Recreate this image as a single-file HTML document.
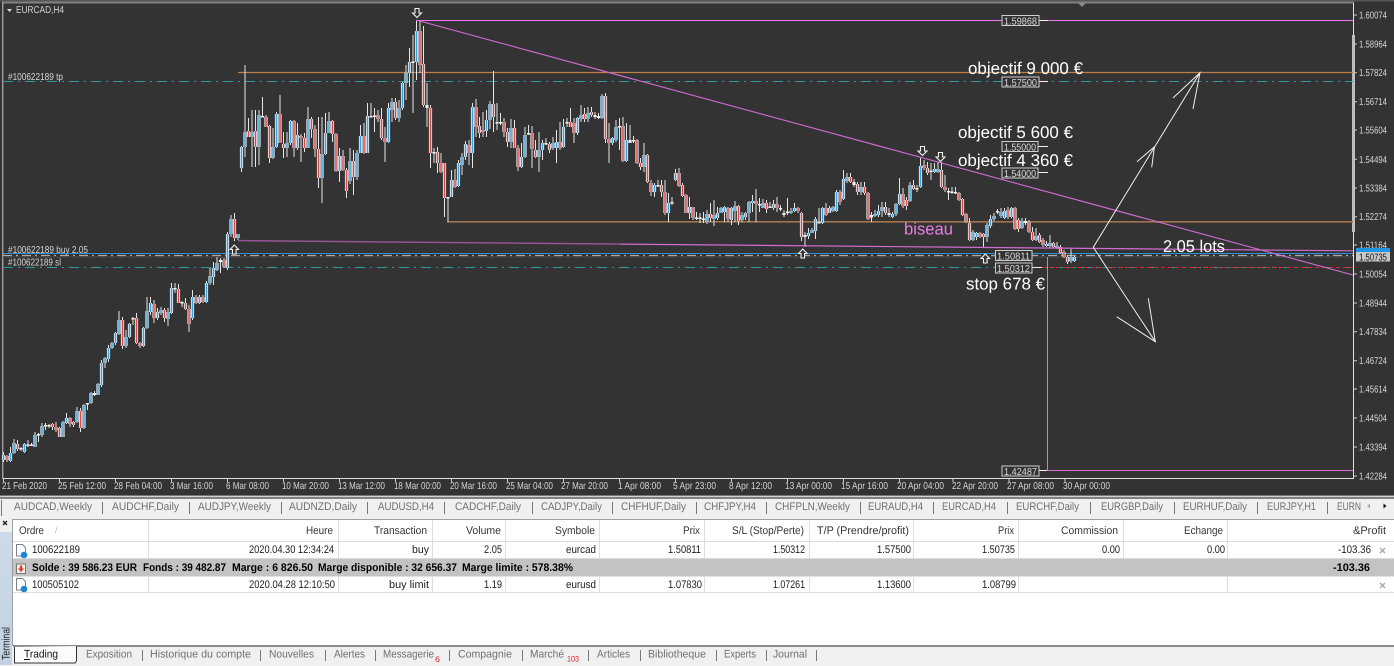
<!DOCTYPE html>
<html lang="fr"><head><meta charset="utf-8"><title>EURCAD,H4</title>
<style>
html,body{margin:0;padding:0;background:#f0f0f0;width:1394px;height:666px;overflow:hidden}
svg{display:block;font-family:"Liberation Sans",sans-serif}
.c{font-size:10px;fill:#d4d4d4}
.b{font-size:10px;fill:#d8d8d8}
.l{font-size:17px;fill:#fff}
.tb{font-size:11px;fill:#707070}
.h{font-size:11px;fill:#333}
.r{font-size:11px;fill:#222}
.s{font-size:11px;fill:#000;font-weight:bold}
</style></head><body>
<svg width="1394" height="666" viewBox="0 0 1394 666" xmlns="http://www.w3.org/2000/svg" text-rendering="geometricPrecision">
<defs>
<path id="pB" d="M3.5 455V460M10.5 453V461M14 443V453M24.5 444V452M35 435V447M42 426V435M63 422V437M66.5 418V423M77 411V422M84 405V428M91 393V403M98 384V395M101.5 363V385M105 358V363M108.5 348V359M112 343V348M115.5 333V343M119 320V334M126 337V346M129.5 324V337M143.5 328V346M147 311V328M150.5 303V312M157.5 312V318M161 310V313M168 312V319M171.5 288V313M192.5 297V318M199.5 297V303M206.5 283V302M210 276V283M213.5 268V277M217 263V270M227.5 234V268M231 219V234M238 234V238M241.5 147V168M245 132V147M252 132V137M259 115V147M273 147V158M276.5 114V147M287 143V148M290.5 121V143M297.5 135V148M308 119V148M322 154V178M325.5 133V154M329 121V133M339.5 156V171M350 161V181M357 153V177M360.5 136V153M367.5 116V153M388.5 108V142M392 102V110M399 108V118M402.5 83V108M406 73V83M409.5 62V73M416.5 31V62M451.5 180V197M458.5 163V186M462 157V165M465.5 144V157M472.5 107V153M486.5 120V131M490 104V120M511 128V142M521.5 157V167M525 135V157M539 150V157M542.5 143V150M553 143V148M556.5 142V148M563.5 127V147M577.5 118V133M581 115V119M588 113V119M602 96V118M612.5 138V143M616 127V140M626.5 140V161M644 155V167M654.5 185V192M668.5 203V213M675.5 173V180M689.5 207V213M707 214V222M714 215V219M717.5 213V218M721 208V213M724.5 207V212M731.5 208V220M735 206V211M742 215V220M745.5 213V217M749 202V213M752.5 201V203M763 203V208M773.5 204V208M791 211V213M794.5 208V211M808.5 233V236M812 230V233M815.5 219V231M822.5 208V223M829.5 208V213M833 207V211M836.5 192V211M843.5 179V199M847 177V181M861 187V192M875 214V216M878.5 211V215M882 207V211M892.5 214V217M896 204V214M899.5 194V204M910 185V201M920.5 166V187M934.5 169V172M938 169V172M973 232V240M976.5 233V237M987 225V237M990.5 219V226M994 216V219M1001 212V216M1004.5 211V218M1011.5 208V217M1022 221V228M1036 236V240M1046.5 244V246M1050 243V246M1057 246V248M1071 257V261M1074.5 257V261"/>
<path id="pR" d="M7 456V460M17.5 444V449M52.5 424V427M56 427V430M59.5 428V437M70 418V424M73.5 422V425M80.5 411V428M122.5 320V346M136.5 318V343M140 343V346M154 304V318M164.5 310V318M178.5 289V303M185.5 303V309M189 309V324M196 297V303M203 297V302M224 260V267M234.5 219V238M248.5 131V137M255.5 131V147M266 117V127M269.5 126V158M280 114V143M283.5 144V148M294 121V148M301 136V138M304.5 138V148M311.5 119V129M315 129V149M318.5 149V178M332.5 121V134M336 134V171M343 156V170M346.5 170V191M353.5 161V177M364 136V153M378 115V119M381.5 119V138M385 138V142M395.5 102V118M420 31V65M423.5 64V105M430.5 108V153M437.5 152V163M441 163V172M444.5 163V198M455 180V187M469 145V153M476 107V127M479.5 126V133M483 130V132M493.5 104V117M504 122V132M507.5 132V142M514.5 128V148M518 148V167M532 133V149M535.5 150V157M549.5 144V150M560 142V148M570.5 122V127M574 123V133M584.5 114V119M591.5 112V115M605.5 96V139M609 139V143M623 126V161M637 140V163M640.5 163V167M647.5 155V182M651 183V192M661.5 185V192M665 192V213M679 173V186M682.5 185V196M686 195V213M693 207V218M710.5 214V218M728 208V219M738.5 206V221M756 201V204M766.5 203V209M777 204V208M798 208V211M801.5 213V237M826 208V215M840 192V202M850.5 177V182M857.5 184V192M864.5 187V193M868 193V219M885.5 207V213M903 194V206M906.5 200V206M913.5 185V189M924 165V168M927.5 168V173M941.5 170V187M945 187V190M959 193V200M962.5 199V215M966 214V222M969.5 223V240M980 233V237M983.5 234V237M1008 210V217M1015 208V229M1018.5 220V229M1029 222V232M1032.5 232V240M1039.5 235V242M1043 240V245M1053.5 243V247M1060.5 247V253M1064 252V257M1067.5 257V262"/>
</defs>
<!-- chart background -->
<rect x="0" y="0" width="1394" height="497" fill="#333"/>
<rect x="0" y="0" width="1394" height="1.5" fill="#555"/>
<rect x="2" y="1.5" width="1352" height="2" fill="#808080"/>
<rect x="2" y="2" width="1.4" height="477" fill="#a0a0a0"/>
<path d="M3 478.5H1353.5V3" fill="none" stroke="#e0e0e0" stroke-width="1"/>
<rect x="1352" y="35" width="3" height="197" fill="#bdbdbd"/>
<path d="M1078 3h8l-4 4z" fill="#888"/>
<path d="M7 9h5l-2.5 3z" fill="#ddd"/>
<text class="c" x="16" y="13" textLength="48" lengthAdjust="spacingAndGlyphs">EURCAD,H4</text>
<text class="c" x="8" y="80" textLength="55" lengthAdjust="spacingAndGlyphs">#100622189 tp</text>
<text class="c" x="8" y="253" textLength="80" lengthAdjust="spacingAndGlyphs">#100622189 buy 2.05</text>
<text class="c" x="8" y="265.5" textLength="53" lengthAdjust="spacingAndGlyphs">#100622189 sl</text>

<!-- levels -->
<rect x="3" y="256" width="1350" height="2" fill="#3e3e3e"/>
<path d="M3 81.5H1353" stroke="#2f9a9a" stroke-width="1" stroke-dasharray="10 5 2 5" fill="none"/>
<path d="M3 267.5H1353" stroke="#2f9a9a" stroke-width="1" stroke-dasharray="10 5 2 5" fill="none"/>
<path d="M1042 267.5H1353" stroke="#e0242e" stroke-width="1" stroke-dasharray="4 3" fill="none"/>
<path d="M3 255.5H1353" stroke="#aaa" stroke-width="1.3" stroke-dasharray="9 4 2 4" fill="none"/>
<path d="M3 253.5H1353" stroke="#2e8fd6" stroke-width="1" fill="none"/>
<path d="M238 72.5H1353" stroke="#c07d45" stroke-width="1.3" fill="none"/>
<path d="M447 221.8H1353" stroke="#a0754e" stroke-width="1.6" fill="none"/>

<!-- candles -->
<path fill="none" stroke="#e6e6e6" stroke-width="1" d="M3.5 452V462M7 455V462M10.5 447V462M14 439V454M17.5 440V451M21 447V451M24.5 443V453M28 440V447M31.5 443V446M35 432V447M38.5 433V442M42 423V437M45.5 423V430M49 424V428M52.5 423V430M56 422V432M59.5 427V437M63 421V437M66.5 413V424M70 417V427M73.5 421V427M77 407V423M80.5 408V432M84 404V429M87.5 403V410M91 392V404M94.5 391V396M98 383V395M101.5 360V387M105 357V368M108.5 345V362M112 342V349M115.5 332V345M119 311V335M122.5 317V349M126 330V348M129.5 323V338M133 317V325M136.5 313V344M140 342V348M143.5 327V347M147 297V329M150.5 297V315M154 300V323M157.5 308V320M161 307V315M164.5 308V322M168 308V326M171.5 283V314M175 283V293M178.5 284V303M182 301V307M185.5 298V310M189 305V332M192.5 290V320M196 295V304M199.5 295V304M203 295V303M206.5 281V303M210 268V285M213.5 262V285M217 257V271M220.5 258V273M224 258V268M227.5 232V270M231 215V237M234.5 213V241M238 234V240M241.5 146V172M245 65V157M248.5 118V137M252 110V167M255.5 110V167M259 110V165M262.5 97V117M266 115V127M269.5 125V163M273 128V159M276.5 112V148M280 95V143M283.5 132V158M287 132V157M290.5 120V145M294 120V157M297.5 123V150M301 134V162M304.5 133V152M308 107V148M311.5 117V138M315 125V157M318.5 117V188M322 117V203M325.5 113V155M329 112V133M332.5 120V142M336 133V172M339.5 148V182M343 150V171M346.5 168V198M350 148V184M353.5 150V195M357 150V180M360.5 125V153M364 123V154M367.5 103V153M371 103V117M374.5 108V132M378 110V122M381.5 108V140M385 127V162M388.5 103V143M392 98V122M395.5 98V120M399 100V122M402.5 82V110M406 65V100M409.5 48V87M413 35V113M416.5 21V80M420 20V73M423.5 26V107M427 83V127M430.5 105V168M434 148V163M437.5 147V173M441 153V173M444.5 163V217M448 197V222M451.5 170V197M455 169V188M458.5 160V187M462 153V175M465.5 141V160M469 140V165M472.5 103V168M476 99V137M479.5 117V138M483 112V137M486.5 110V137M490 101V129M493.5 71V132M497 103V130M500.5 113V125M504 118V137M507.5 128V147M511 119V148M514.5 120V148M518 145V171M521.5 143V168M525 127V158M528.5 125V135M532 126V168M535.5 140V158M539 132V172M542.5 140V160M546 138V145M549.5 142V153M553 137V150M556.5 130V163M560 122V150M563.5 119V148M567 118V127M570.5 108V127M574 118V143M577.5 117V135M581 105V122M584.5 108V122M588 107V122M591.5 107V117M595 112V119M598.5 113V119M602 94V119M605.5 93V143M609 123V163M612.5 137V145M616 120V142M619.5 118V150M623 117V162M626.5 123V162M630 125V143M633.5 136V143M637 139V164M640.5 158V170M644 143V172M647.5 154V183M651 180V196M654.5 183V197M658 180V187M661.5 180V197M665 180V215M668.5 193V222M672 197V205M675.5 169V181M679 168V187M682.5 183V197M686 194V213M689.5 197V219M693 207V220M696.5 212V220M700 213V223M703.5 212V223M707 210V224M710.5 203V222M714 200V226M717.5 207V220M721 207V213M724.5 206V222M728 207V222M731.5 207V225M735 201V222M738.5 205V225M742 212V222M745.5 212V220M749 201V222M752.5 195V212M756 189V222M759.5 198V212M763 199V208M766.5 200V213M770 202V208M773.5 200V210M777 197V212M780.5 205V211M784 210V217M787.5 198V215M791 208V214M794.5 203V212M798 207V213M801.5 212V241M805 232V247M808.5 228V239M812 228V233M815.5 217V239M819 208V223M822.5 207V224M826 203V216M829.5 206V213M833 206V212M836.5 190V212M840 190V205M843.5 170V200M847 173V183M850.5 173V183M854 179V187M857.5 182V195M861 182V195M864.5 182V195M868 192V220M871.5 212V222M875 210V217M878.5 205V217M882 202V217M885.5 202V215M889 208V217M892.5 212V218M896 203V216M899.5 178V205M903 188V208M906.5 197V210M910 182V202M913.5 180V190M917 185V192M920.5 158V188M924 160V170M927.5 162V175M931 163V180M934.5 163V173M938 162V173M941.5 162V188M945 175V192M948.5 188V200M952 187V194M955.5 187V194M959 192V201M962.5 198V216M966 213V223M969.5 218V241M973 230V241M976.5 232V240M980 232V238M983.5 233V248M987 223V242M990.5 215V228M994 213V221M997.5 209V214M1001 208V218M1004.5 208V219M1008 207V219M1011.5 207V218M1015 207V230M1018.5 218V232M1022 218V229M1025.5 218V225M1029 220V233M1032.5 227V241M1036 228V241M1039.5 233V243M1043 238V247M1046.5 241V247M1050 235V248M1053.5 242V248M1057 242V249M1060.5 245V254M1064 250V258M1067.5 255V264M1071 249V263M1074.5 256V262"/>
<use href="#pB" fill="none" stroke="#f0f0f0" stroke-width="3.2"/>
<use href="#pR" fill="none" stroke="#f0f0f0" stroke-width="3.2"/>
<path fill="none" stroke="#f0f0f0" stroke-width="3.2" d="M21 448V449.5M28 444.5V446M31.5 444.5V446M38.5 434V435.5M45.5 425V426.5M49 425V426.5M87.5 403V404.5M94.5 393V395M133 318V319.5M175 288V289.5M182 302V303.5M220.5 260V262M262.5 116V117.5M371 116V117.5M374.5 115.5V117M413 61.5V63M427 105V108M434 152V153.5M448 197V198.5M497 122V123.5M500.5 122V123.5M528.5 133V134.5M546 143V144.5M567 122V123.5M595 115V117M598.5 116V118M619.5 126V127.5M630 140V143M633.5 140V141.5M658 185V186.5M672 202V203.5M696.5 217.5V219M700 217.5V219M703.5 218.5V220M759.5 204V205.5M770 206.5V208M780.5 208V209.5M784 213V215M787.5 211.5V213M805 235V237M819 222V223.5M854 182V185M871.5 215V217.5M889 213V215M917 188V189.5M931 170.5V172M948.5 191V192.5M952 191.5V193M955.5 192V193.5M997.5 211V212.5M1025.5 221V223"/>
<use href="#pB" fill="none" stroke="#38a0e0" stroke-width="1.5"/>
<use href="#pR" fill="none" stroke="#d84848" stroke-width="1.5"/>

<!-- object lines -->
<g fill="none" stroke-width="1">
<path d="M416 20.5H1353" stroke="#ec74ec"/>
<path d="M416 20L1353 275" stroke="#d46cd4" stroke-width="1.1"/>
<path d="M238 240.6L620 244.1" stroke="#985698" stroke-width="1.4"/>
<path d="M620 244.1L1353 250.8" stroke="#d46cd4" stroke-width="1.2"/>
<path d="M1047.5 257V470.5H1353" stroke="#dd72dd"/>
<path d="M1039 20.5h9M1039 81.5h9M1038 146.5h10M1038 172.5h10M1032 267.5h10M1039 470.5h8" stroke="#f0f0f0"/>
</g>

<!-- drawn arrows -->
<g fill="none" stroke="#efefef" stroke-width="1">
<path d="M1200 72.7L1093.3 247.3L1155.3 341.7"/>
<path d="M1173 98L1200 72.7L1193 109"/>
<path d="M1137 161.7L1154.5 146.7L1151.7 167.3"/>
<path d="M1116.7 316.7L1155.3 341.7L1148.3 298.3"/>
</g>

<!-- wingding arrows -->
<g fill="#333" stroke="#f2f2f2" stroke-width="1.1">
<path d="M415 8.5h4v4.5h2.5l-4.5 4.5l-4.5-4.5h2.5z"/>
<path d="M920.5 146.5h4v4.5h2.5l-4.5 4.5l-4.5-4.5h2.5z"/>
<path d="M938.5 152.5h4v4.5h2.5l-4.5 4.5l-4.5-4.5h2.5z"/>
<path d="M232.5 254h3.6v-4.5h2.4l-4.2-4.5l-4.2 4.5h2.4z"/>
<path d="M801 258h3.6v-4.5h2.4l-4.2-4.5l-4.2 4.5h2.4z"/>
<path d="M983.5 263h3.6v-4.5h2.4l-4.2-4.5l-4.2 4.5h2.4z"/>
</g>

<!-- price boxes -->
<g fill="#333" stroke="#cfcfcf" stroke-width="1">
<rect x="1002" y="15.5" width="37" height="10"/>
<rect x="1002" y="77" width="37" height="10"/>
<rect x="1002" y="141.5" width="36" height="10"/>
<rect x="1002" y="168" width="36" height="10"/>
<rect x="995.5" y="250.5" width="36.5" height="10"/>
<rect x="995.5" y="263" width="36.5" height="10"/>
<rect x="1002" y="466" width="37" height="10"/>
</g>
<text class="b" x="1004" y="24.5" textLength="33" lengthAdjust="spacingAndGlyphs">1.59868</text>
<text class="b" x="1004" y="86" textLength="33" lengthAdjust="spacingAndGlyphs">1.57500</text>
<text class="b" x="1004" y="150.5" textLength="32" lengthAdjust="spacingAndGlyphs">1.55000</text>
<text class="b" x="1004" y="177" textLength="32" lengthAdjust="spacingAndGlyphs">1.54000</text>
<text class="b" x="997" y="259.5" textLength="33" lengthAdjust="spacingAndGlyphs">1.50811</text>
<text class="b" x="997" y="272" textLength="33" lengthAdjust="spacingAndGlyphs">1.50312</text>
<text class="b" x="1004" y="475" textLength="33" lengthAdjust="spacingAndGlyphs">1.42487</text>

<!-- annotations -->
<text class="l" x="968" y="74" textLength="115" lengthAdjust="spacingAndGlyphs">objectif 9 000 €</text>
<text class="l" x="958" y="138" textLength="115" lengthAdjust="spacingAndGlyphs">objectif 5 600 €</text>
<text class="l" x="958" y="166" textLength="115" lengthAdjust="spacingAndGlyphs">objectif 4 360 €</text>
<text class="l" x="904" y="234.5" textLength="49" lengthAdjust="spacingAndGlyphs" style="fill:#e87de8">biseau</text>
<text class="l" x="1163" y="252" textLength="62" lengthAdjust="spacingAndGlyphs">2.05 lots</text>
<text class="l" x="966" y="289.5" textLength="79" lengthAdjust="spacingAndGlyphs">stop 678 €</text>

<!-- price axis -->
<path d="M1354 15h3M1354 44h3M1354 72.7h3M1354 101.7h3M1354 130h3M1354 159.3h3M1354 188h3M1354 216.7h3M1354 245h3M1354 274h3M1354 303h3M1354 331.7h3M1354 360.7h3M1354 389h3M1354 418h3M1354 447h3M1354 476h3" stroke="#ccc" fill="none"/>
<g class="c">
<text class="c" x="1359" y="18.5" textLength="28" lengthAdjust="spacingAndGlyphs">1.60074</text>
<text class="c" x="1359" y="47.5" textLength="28" lengthAdjust="spacingAndGlyphs">1.58964</text>
<text class="c" x="1359" y="76.2" textLength="28" lengthAdjust="spacingAndGlyphs">1.57824</text>
<text class="c" x="1359" y="105.2" textLength="28" lengthAdjust="spacingAndGlyphs">1.56714</text>
<text class="c" x="1359" y="133.5" textLength="28" lengthAdjust="spacingAndGlyphs">1.55604</text>
<text class="c" x="1359" y="162.8" textLength="28" lengthAdjust="spacingAndGlyphs">1.54494</text>
<text class="c" x="1359" y="191.5" textLength="28" lengthAdjust="spacingAndGlyphs">1.53384</text>
<text class="c" x="1359" y="220.2" textLength="28" lengthAdjust="spacingAndGlyphs">1.52274</text>
<text class="c" x="1359" y="248.5" textLength="28" lengthAdjust="spacingAndGlyphs">1.51164</text>
<text class="c" x="1359" y="277.5" textLength="28" lengthAdjust="spacingAndGlyphs">1.50054</text>
<text class="c" x="1359" y="306.5" textLength="28" lengthAdjust="spacingAndGlyphs">1.48944</text>
<text class="c" x="1359" y="335.2" textLength="28" lengthAdjust="spacingAndGlyphs">1.47834</text>
<text class="c" x="1359" y="364.2" textLength="28" lengthAdjust="spacingAndGlyphs">1.46724</text>
<text class="c" x="1359" y="392.5" textLength="28" lengthAdjust="spacingAndGlyphs">1.45614</text>
<text class="c" x="1359" y="421.5" textLength="28" lengthAdjust="spacingAndGlyphs">1.44504</text>
<text class="c" x="1359" y="450.5" textLength="28" lengthAdjust="spacingAndGlyphs">1.43394</text>
<text class="c" x="1359" y="479.5" textLength="28" lengthAdjust="spacingAndGlyphs">1.42284</text>
</g>
<rect x="1356" y="248" width="34" height="4.5" fill="#1e96e8"/>
<rect x="1356" y="252" width="34" height="9.5" fill="#c8c8c8"/>
<text x="1359" y="260.5" font-size="10" fill="#111" textLength="28" lengthAdjust="spacingAndGlyphs">1.50735</text>

<!-- time axis -->
<path d="M3.5 479v3M59.5 479v3M115.5 479v3M171.5 479v3M227.5 479v3M283.5 479v3M339.5 479v3M395.5 479v3M451.5 479v3M507.5 479v3M563.5 479v3M619.5 479v3M675.5 479v3M731.5 479v3M787.5 479v3M843.5 479v3M899.5 479v3M953 479v3M1009 479v3M1065 479v3" stroke="#ccc" fill="none"/>
<text class="c" x="2" y="489" textLength="45" lengthAdjust="spacingAndGlyphs">21 Feb 2020</text>
<text class="c" x="58" y="489" textLength="48" lengthAdjust="spacingAndGlyphs">25 Feb 12:00</text>
<text class="c" x="114" y="489" textLength="48" lengthAdjust="spacingAndGlyphs">28 Feb 04:00</text>
<text class="c" x="170" y="489" textLength="43" lengthAdjust="spacingAndGlyphs">3 Mar 16:00</text>
<text class="c" x="226" y="489" textLength="43" lengthAdjust="spacingAndGlyphs">6 Mar 08:00</text>
<text class="c" x="282" y="489" textLength="47" lengthAdjust="spacingAndGlyphs">10 Mar 20:00</text>
<text class="c" x="338" y="489" textLength="47" lengthAdjust="spacingAndGlyphs">13 Mar 12:00</text>
<text class="c" x="394" y="489" textLength="47" lengthAdjust="spacingAndGlyphs">18 Mar 00:00</text>
<text class="c" x="450" y="489" textLength="47" lengthAdjust="spacingAndGlyphs">20 Mar 16:00</text>
<text class="c" x="506" y="489" textLength="47" lengthAdjust="spacingAndGlyphs">25 Mar 04:00</text>
<text class="c" x="561" y="489" textLength="47" lengthAdjust="spacingAndGlyphs">27 Mar 20:00</text>
<text class="c" x="618" y="489" textLength="43" lengthAdjust="spacingAndGlyphs">1 Apr 08:00</text>
<text class="c" x="673" y="489" textLength="43" lengthAdjust="spacingAndGlyphs">5 Apr 23:00</text>
<text class="c" x="729" y="489" textLength="43" lengthAdjust="spacingAndGlyphs">8 Apr 12:00</text>
<text class="c" x="785" y="489" textLength="47" lengthAdjust="spacingAndGlyphs">13 Apr 00:00</text>
<text class="c" x="841" y="489" textLength="47" lengthAdjust="spacingAndGlyphs">15 Apr 16:00</text>
<text class="c" x="897" y="489" textLength="47" lengthAdjust="spacingAndGlyphs">20 Apr 04:00</text>
<text class="c" x="952" y="489" textLength="46" lengthAdjust="spacingAndGlyphs">22 Apr 20:00</text>
<text class="c" x="1007" y="489" textLength="47" lengthAdjust="spacingAndGlyphs">27 Apr 08:00</text>
<text class="c" x="1063" y="489" textLength="47" lengthAdjust="spacingAndGlyphs">30 Apr 00:00</text>

<!-- chart tabs bar -->
<rect x="0" y="495.5" width="1394" height="1" fill="#b8b8b8"/>
<rect x="0" y="496.5" width="1394" height="1" fill="#eee"/>
<rect x="0" y="497.5" width="1394" height="1" fill="#111"/>
<rect x="0" y="498.5" width="1394" height="168" fill="#f0f0f0"/>
<path d="M1.5 500v16M102.5 502v12M189.5 502v12M281.5 502v12M367.5 502v12M444.5 502v12M532.5 502v12M612.5 502v12M696.5 502v12M766.5 502v12M860.5 502v12M933.5 502v12M1007.5 502v12M1090.5 502v12M1174.5 502v12M1257.5 502v12M1327.5 502v12" stroke="#777" fill="none"/>
<text class="tb" x="14" y="510" textLength="78" lengthAdjust="spacingAndGlyphs">AUDCAD,Weekly</text>
<text class="tb" x="112" y="510" textLength="67" lengthAdjust="spacingAndGlyphs">AUDCHF,Daily</text>
<text class="tb" x="198" y="510" textLength="73" lengthAdjust="spacingAndGlyphs">AUDJPY,Weekly</text>
<text class="tb" x="289" y="510" textLength="68" lengthAdjust="spacingAndGlyphs">AUDNZD,Daily</text>
<text class="tb" x="378" y="510" textLength="56" lengthAdjust="spacingAndGlyphs">AUDUSD,H4</text>
<text class="tb" x="455" y="510" textLength="66" lengthAdjust="spacingAndGlyphs">CADCHF,Daily</text>
<text class="tb" x="541" y="510" textLength="61" lengthAdjust="spacingAndGlyphs">CADJPY,Daily</text>
<text class="tb" x="621" y="510" textLength="65" lengthAdjust="spacingAndGlyphs">CHFHUF,Daily</text>
<text class="tb" x="704" y="510" textLength="52" lengthAdjust="spacingAndGlyphs">CHFJPY,H4</text>
<text class="tb" x="775" y="510" textLength="75" lengthAdjust="spacingAndGlyphs">CHFPLN,Weekly</text>
<text class="tb" x="868" y="510" textLength="55" lengthAdjust="spacingAndGlyphs">EURAUD,H4</text>
<text class="tb" x="942" y="510" textLength="54" lengthAdjust="spacingAndGlyphs">EURCAD,H4</text>
<text class="tb" x="1016" y="510" textLength="63" lengthAdjust="spacingAndGlyphs">EURCHF,Daily</text>
<text class="tb" x="1101" y="510" textLength="62" lengthAdjust="spacingAndGlyphs">EURGBP,Daily</text>
<text class="tb" x="1183" y="510" textLength="64" lengthAdjust="spacingAndGlyphs">EURHUF,Daily</text>
<text class="tb" x="1267" y="510" textLength="49" lengthAdjust="spacingAndGlyphs">EURJPY,H1</text>
<text class="tb" x="1337" y="510" textLength="24" lengthAdjust="spacingAndGlyphs">EURN</text>
<rect x="1361" y="499" width="33" height="17" fill="#f0f0f0"/>
<path d="M1370 503.5v5l-3-2.5z" fill="#aaa"/>
<path d="M1383.5 503.5v5l3-2.5z" fill="#111"/>

<!-- terminal side -->
<defs><linearGradient id="sb" x1="0" y1="0" x2="0" y2="1"><stop offset="0" stop-color="#cddbe9"/><stop offset="1" stop-color="#c2d2e3"/></linearGradient></defs>
<rect x="0" y="532" width="12" height="133" fill="url(#sb)"/>
<path d="M3 521l4 4M7 521l-4 4" stroke="#222" stroke-width="1.4" fill="none"/>
<text transform="translate(9.5 660) rotate(-90)" font-size="11" fill="#222" textLength="33" lengthAdjust="spacingAndGlyphs">Terminal</text>

<!-- table -->
<rect x="13" y="519" width="1381" height="127" fill="#fff"/>
<path d="M12.5 519.5H1394M12.5 519V646" stroke="#a0a0a0" fill="none"/>
<rect x="13" y="559" width="1381" height="17.5" fill="#c3c3c3"/>
<path d="M13 541.5H1394M13 558.5H1394M13 592.5H1394" stroke="#dcdcdc" fill="none"/>
<path d="M148.5 520V558M338.5 520V558M432.5 520V558M505.5 520V558M599.5 520V558M704.5 520V558M809.5 520V558M913.5 520V558M1018.5 520V558M1123.5 520V558M1227.5 520V558M148.5 577V592M338.5 577V592M432.5 577V592M505.5 577V592M599.5 577V592M704.5 577V592M809.5 577V592M913.5 577V592M1018.5 577V592M1227.5 577V592" stroke="#dedede" fill="none"/>

<text class="h" x="19" y="534" textLength="25" lengthAdjust="spacingAndGlyphs">Ordre</text>
<text x="55" y="533" font-size="8" fill="#aaa">/</text>
<text class="h" x="306" y="534" textLength="27" lengthAdjust="spacingAndGlyphs">Heure</text>
<text class="h" x="374" y="534" textLength="53" lengthAdjust="spacingAndGlyphs">Transaction</text>
<text class="h" x="466" y="534" textLength="35" lengthAdjust="spacingAndGlyphs">Volume</text>
<text class="h" x="555" y="534" textLength="40" lengthAdjust="spacingAndGlyphs">Symbole</text>
<text class="h" x="683" y="534" textLength="17" lengthAdjust="spacingAndGlyphs">Prix</text>
<text class="h" x="732" y="534" textLength="72" lengthAdjust="spacingAndGlyphs">S/L (Stop/Perte)</text>
<text class="h" x="817" y="534" textLength="92" lengthAdjust="spacingAndGlyphs">T/P (Prendre/profit)</text>
<text class="h" x="998" y="534" textLength="16" lengthAdjust="spacingAndGlyphs">Prix</text>
<text class="h" x="1061" y="534" textLength="57" lengthAdjust="spacingAndGlyphs">Commission</text>
<text class="h" x="1184" y="534" textLength="39" lengthAdjust="spacingAndGlyphs">Echange</text>
<text class="h" x="1353" y="534" textLength="33" lengthAdjust="spacingAndGlyphs">&amp;Profit</text>

<!-- icons -->
<g fill="#fff" stroke="#77838f" stroke-width="1">
<path d="M16.5 544.5h6l3 3v8.5h-9z"/>
<path d="M16.5 578.5h6l3 3v8.5h-9z"/>
</g>
<circle cx="24" cy="555" r="3.3" fill="#1e84d8"/>
<circle cx="24" cy="589" r="3.3" fill="#1e84d8"/>
<rect x="16.5" y="564" width="9" height="9.5" fill="#efefef" stroke="#777"/>
<path d="M19.8 565.5h2.4v3h2l-3.2 3.5l-3.2-3.5h2z" fill="#d8401f"/>

<text class="r" x="32" y="553" textLength="48" lengthAdjust="spacingAndGlyphs">100622189</text>
<text class="r" x="249" y="553" textLength="85" lengthAdjust="spacingAndGlyphs">2020.04.30 12:34:24</text>
<text class="r" x="412" y="553" textLength="17" lengthAdjust="spacingAndGlyphs">buy</text>
<text class="r" x="484" y="553" textLength="18" lengthAdjust="spacingAndGlyphs">2.05</text>
<text class="r" x="566" y="553" textLength="30" lengthAdjust="spacingAndGlyphs">eurcad</text>
<text class="r" x="668" y="553" textLength="33" lengthAdjust="spacingAndGlyphs">1.50811</text>
<text class="r" x="773" y="553" textLength="32" lengthAdjust="spacingAndGlyphs">1.50312</text>
<text class="r" x="877" y="553" textLength="34" lengthAdjust="spacingAndGlyphs">1.57500</text>
<text class="r" x="982" y="553" textLength="33" lengthAdjust="spacingAndGlyphs">1.50735</text>
<text class="r" x="1102" y="553" textLength="18" lengthAdjust="spacingAndGlyphs">0.00</text>
<text class="r" x="1207" y="553" textLength="18" lengthAdjust="spacingAndGlyphs">0.00</text>
<text class="r" x="1338" y="553" textLength="33" lengthAdjust="spacingAndGlyphs">-103.36</text>
<path d="M1380 548l5 5M1385 548l-5 5M1380 583l5 5M1385 583l-5 5" stroke="#a8a8a8" stroke-width="1.4" fill="none"/>

<text class="s" x="32" y="571" textLength="105" lengthAdjust="spacingAndGlyphs">Solde : 39 586.23 EUR</text>
<text class="s" x="143" y="571" textLength="83" lengthAdjust="spacingAndGlyphs">Fonds : 39 482.87</text>
<text class="s" x="232" y="571" textLength="81" lengthAdjust="spacingAndGlyphs">Marge : 6 826.50</text>
<text class="s" x="318" y="571" textLength="139" lengthAdjust="spacingAndGlyphs">Marge disponible : 32 656.37</text>
<text class="s" x="462" y="571" textLength="111" lengthAdjust="spacingAndGlyphs">Marge limite : 578.38%</text>
<text class="s" x="1333" y="571" textLength="37" lengthAdjust="spacingAndGlyphs">-103.36</text>

<text class="r" x="32" y="588" textLength="47" lengthAdjust="spacingAndGlyphs">100505102</text>
<text class="r" x="249" y="588" textLength="86" lengthAdjust="spacingAndGlyphs">2020.04.28 12:10:50</text>
<text class="r" x="389" y="588" textLength="40" lengthAdjust="spacingAndGlyphs">buy limit</text>
<text class="r" x="484" y="588" textLength="18" lengthAdjust="spacingAndGlyphs">1.19</text>
<text class="r" x="566" y="588" textLength="30" lengthAdjust="spacingAndGlyphs">eurusd</text>
<text class="r" x="668" y="588" textLength="34" lengthAdjust="spacingAndGlyphs">1.07830</text>
<text class="r" x="773" y="588" textLength="32" lengthAdjust="spacingAndGlyphs">1.07261</text>
<text class="r" x="877" y="588" textLength="34" lengthAdjust="spacingAndGlyphs">1.13600</text>
<text class="r" x="982" y="588" textLength="34" lengthAdjust="spacingAndGlyphs">1.08799</text>

<!-- bottom tabs -->
<rect x="13" y="645" width="1381" height="2" fill="#8c8c8c"/>
<rect x="13" y="647" width="1381" height="18" fill="#f0f0f0"/>
<path d="M14.5 647V663H75L76.5 661V646" stroke="#333" stroke-width="1" fill="#fcfcfc"/>
<text x="24" y="657.5" font-size="11" fill="#111" textLength="34" lengthAdjust="spacingAndGlyphs">Trading</text>
<path d="M24 659.5h6" stroke="#111" fill="none"/>
<path d="M142.5 650v11M260.5 650v11M325.5 650v11M375.5 650v11M449.5 650v11M522.5 650v11M588.5 650v11M640.5 650v11M716.5 650v11M766.5 650v11M816.5 650v11" stroke="#777" fill="none"/>
<text class="tb" x="86" y="657.5" textLength="46" lengthAdjust="spacingAndGlyphs">Exposition</text>
<text class="tb" x="150" y="657.5" textLength="101" lengthAdjust="spacingAndGlyphs">Historique du compte</text>
<text class="tb" x="269" y="657.5" textLength="45" lengthAdjust="spacingAndGlyphs">Nouvelles</text>
<text class="tb" x="334" y="657.5" textLength="31" lengthAdjust="spacingAndGlyphs">Alertes</text>
<text class="tb" x="383" y="657.5" textLength="51" lengthAdjust="spacingAndGlyphs">Messagerie</text>
<text x="435" y="662" font-size="8" fill="#e02020" textLength="5" lengthAdjust="spacingAndGlyphs">6</text>
<text class="tb" x="458" y="657.5" textLength="54" lengthAdjust="spacingAndGlyphs">Compagnie</text>
<text class="tb" x="530" y="657.5" textLength="34" lengthAdjust="spacingAndGlyphs">Marché</text>
<text x="567" y="661.5" font-size="8" fill="#e02020" textLength="12" lengthAdjust="spacingAndGlyphs">103</text>
<text class="tb" x="597" y="657.5" textLength="33" lengthAdjust="spacingAndGlyphs">Articles</text>
<text class="tb" x="648" y="657.5" textLength="58" lengthAdjust="spacingAndGlyphs">Bibliotheque</text>
<text class="tb" x="724" y="657.5" textLength="32" lengthAdjust="spacingAndGlyphs">Experts</text>
<text class="tb" x="773" y="657.5" textLength="34" lengthAdjust="spacingAndGlyphs">Journal</text>
</svg>
</body></html>
